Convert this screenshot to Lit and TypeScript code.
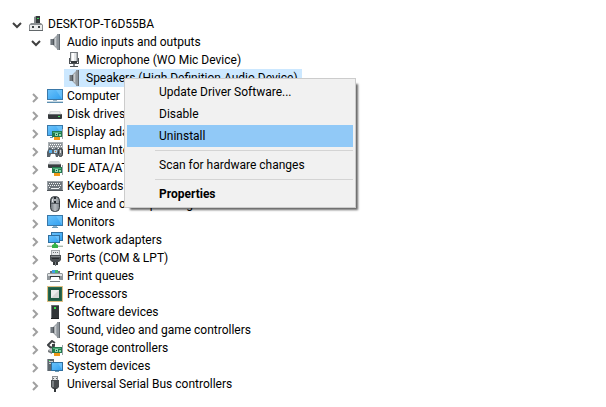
import { LitElement, html, css, svg, nothing, type SVGTemplateResult } from "lit";
import { customElement, state } from "lit/decorators.js";

interface DeviceNode {
  label: string;
  icon: string;
  open?: boolean;
  selected?: boolean;
  leaf?: boolean;
  children?: DeviceNode[];
}

const monitor = svg`
  <rect x="0.5" y="1.5" width="15" height="10" fill="url(#screen)" stroke="#3a78a8"/>
  <path d="M9 2h6v9z" fill="#8ad2ff" opacity=".45"/>`;

const card = svg`
  <path d="M7 13h6v3H7z" fill="#f09a1a"/>
  <path d="M5 7h10v6H5z" fill="#237a4e"/>
  <path d="M15 5h1v10h-1z" fill="#9aa3a8"/>
  <path d="M6 8h8v1H6z" fill="#4faf7c"/>
  <path d="M8 9h3v3H8zM12 10h2v2h-2z" fill="#8fd8ae"/>
  <path d="M9 10h1v1H9z" fill="#17492f"/>`;

const speaker = svg`
  <path d="M3 5h3v6H3z" fill="#70777d"/>
  <path d="M3 5h1v6H3z" fill="#a9afb4"/>
  <path d="M6 5l4-4h1v14h-1l-4-4z" fill="#a3a9ae"/>
  <path d="M6 5h1v6H6z" fill="#50565b"/>
  <path d="M8 4h1v8H8z" fill="#c9cdd0"/>
  <path d="M10 0h3v16h-3z" fill="#8f969c"/>
  <path d="M12 0h1v16h-1z" fill="#636a70"/>`;

const keyboard = svg`
  <rect x="0.5" y="3.5" width="15" height="9" fill="#6f767c" stroke="#9ba1a6"/>
  <path d="M2 5.500h12M1 7.500h13M2 9.500h2M12 9.500h2" stroke="#f2f4f5" stroke-dasharray="1 1"/>
  <path d="M4 10.500h8" stroke="#f2f4f5"/>
  <path d="M0 12h16v1H0z" fill="#4f555a"/>`;

const icons: Record<string, SVGTemplateResult> = {
  host: svg`
    <path d="M8 0h4v8H8z" fill="#35393c"/><path d="M6 1l2-1v8H6z" fill="#85898c"/>
    <path d="M9 2h2v1H9z" fill="#3fd65a"/>
    <path d="M3 7h10l2 2v6H1V9z" fill="#8a8e91"/>
    <path d="M2 9h12v5H2z" fill="#eceded"/>
    <path d="M4 10h2v2H4zM10 10h2v2h-2z" fill="#3c4043"/>
    <path d="M1 14h14v1H1z" fill="#62676a"/>`,
  speaker,
  mic: svg`
    <path d="M4 0h8v10H4z" fill="#777c80"/>
    <path d="M5 1h6v9H5z" fill="#e4e6e7"/>
    <path d="M6 1h2v8H6z" fill="#fff"/><path d="M10 1h1v9h-1z" fill="#b5b9bc"/>
    <path d="M3 6h1v5h8V6h1v6H3z" fill="#4d5154"/>
    <path d="M5 9h6v2H5z" fill="#35393b"/>
    <path d="M7 12h2v2H7z" fill="#85898c"/><path d="M4 14h8v1H4z" fill="#4d5154"/>`,
  computer: svg`${monitor}
    <path d="M6 12h4v1H6z" fill="#9db8c9"/><path d="M0 14h16v1H0z" fill="#5b8eb0"/><path d="M0 13h16v1H0z" fill="#c5d7e2"/>`,
  monitor: svg`${monitor}
    <path d="M6 12h4v1H6z" fill="#8ab0c7"/><path d="M5 13h6v1H5z" fill="#6e9ab5"/>`,
  disk: svg`
    <path d="M3 5h10l2 4H1z" fill="#d7dadb"/>
    <path d="M4 6h8l1 2H3z" fill="#eceeee"/>
    <rect x="1" y="8" width="14" height="5" rx="1" fill="#34383b"/>
    <path d="M2 8h12v1H2z" fill="#676d70"/><path d="M11 10h2v1h-2z" fill="#45de60"/>`,
  display: svg`${monitor}
    <path d="M3 13h3v1H3z" fill="#6e9ab5"/>${card}`,
  hid: svg`
    <rect x="1.500" y="0.500" width="14" height="8" fill="#8f959a" stroke="#aab0b4"/>
    <path d="M3 2.500h12M2 4.500h13M3 6.500h12" stroke="#fff" stroke-dasharray="1 1"/>
    <path d="M2 6h2l1 1h2l1-1h2l1 4v5H9l-1-3H4l-1 3H0v-5z" fill="#59636b"/>
    <path d="M2 8h3v3H2z" fill="#56aeea"/><path d="M7 8h3v3H7z" fill="#a9cfe8"/>
    <path d="M8 9h1v1H8z" fill="#e0792f"/>
    <rect x="11.500" y="6.500" width="4" height="8" rx="2" fill="#72797f" stroke="#363b3f"/>
    <path d="M13 8h1v3h-1z" fill="#dadddf"/>`,
  ide: svg`
    <path d="M3 1h9l2 3H1z" fill="#d3d6d8"/>
    <rect x="1" y="4" width="13" height="4" rx="1" fill="#3a3e41"/>
    <path d="M2 4h11v1H2z" fill="#70767a"/>${card}`,
  keyboard,
  mouse: svg`
    <rect x="3.500" y="0.500" width="9" height="15" rx="4" fill="url(#metal)" stroke="#33383c"/>
    <path d="M4 7h8v1H4z" fill="#565c62"/><path d="M5 3h1v3H5z" fill="#e1e4e6"/>
    <path d="M7 1h2v6H7z" fill="#252a2e"/><path d="M7 3h2v2H7z" fill="#aeb3b7"/>`,
  network: svg`
    <rect x="4.500" y="0.500" width="11" height="8" fill="url(#screen)" stroke="#2f6f9f"/>
    <rect x="1.500" y="3.500" width="11" height="7" fill="url(#screen)" stroke="#2f6f9f"/>
    <path d="M8 4h4v6z" fill="#8ad2ff" opacity=".5"/>
    <path d="M0 13h16v2H0z" fill="#a9b8ae"/><path d="M0 13h16v1H0z" fill="#dce4de"/>
    <path d="M7 11h2v1l2 1v3H5v-3l2-1z" fill="#36b24a"/>`,
  port: svg`
    <path d="M4 0h9v5H4z" fill="#a4a8ab"/><path d="M5 1h7v4H5z" fill="#e6e8e9"/>
    <path d="M6 2h1v1H6zM8 2h1v1H8zM10 2h1v1h-1z" fill="#6c7174"/>
    <path d="M3 5h11v5l-2 2H5l-2-2z" fill="#4b4f52"/><path d="M4 6h9v1H4z" fill="#85898c"/>
    <path d="M5 8h7v1H5z" fill="#282b2d"/>
    <path d="M6 12h5v3H6z" fill="#35393b"/><path d="M8 12h1v4H8z" fill="#777c80"/>`,
  printer: svg`
    <path d="M3 3h10v3H3z" fill="#6b7379"/><path d="M5 2h3v3H5z" fill="#3f9fe8"/><path d="M8 2h3v3H8z" fill="#43b86a"/>
    <path d="M1 5h14l1 1v6H0V6z" fill="#90969a"/>
    <path d="M1 6h14v2H1z" fill="#dfe2e4"/>
    <path d="M3 8h10v4H3z" fill="#2e3235"/><path d="M4 9h8l1 4H3z" fill="#fff"/>
    <path d="M3 13h10v1H3z" fill="#7b8185"/>`,
  cpu: svg`
    <rect x="0.500" y="0.500" width="15" height="15" fill="#f6e9c6" stroke="#c58a22" stroke-dasharray="1 1"/>
    <path d="M1 1h14v14H1z" fill="#286a50"/>
    <path d="M2 2h12v12H2z" fill="#1f5a43"/>
    <path d="M4 4h8v8H4z" fill="#d5d8d6"/><path d="M4 4h8L4 12z" fill="#eceeed"/>`,
  software: svg`
    <path d="M5 1h7v14H5z" fill="#323639"/><path d="M4 1h1v14H4z" fill="#777c80"/>
    <path d="M5 1h7v1H5z" fill="#63686b"/><path d="M7 3h2v2H7z" fill="#39e04d"/>
    <path d="M4 14h8v1H4z" fill="#1d2022"/>`,
  storage: svg`
    <path d="M8 3L5 1 1 5l3 3 3-2V5H5" fill="none" stroke="#3e4245" stroke-width="2"/>
    <path d="M1 10l3-2 3 2v3H4z" fill="#b8bcbf"/><path d="M1 10l4 2v2l-4-2z" fill="#75797c"/>
    ${card}`,
  system: svg`
    <path d="M1 1h6v12H1z" fill="#5d666d"/><path d="M0 1h1v12H0z" fill="#929ba1"/>
    <path d="M2 3h4v1H2zM2 5h4v1H2z" fill="#c6ccd0"/><path d="M2 2h1v1H2z" fill="#3fd65a"/>
    <rect x="4.500" y="4.500" width="11" height="8" fill="url(#screen)" stroke="#2f6f9f"/>
    <path d="M11 5h4v7z" fill="#8ad2ff" opacity=".5"/>
    <path d="M8 13h4v1H8z" fill="#6e9ab5"/>`,
  usb: svg`
    <path d="M5 0h6v4H5z" fill="#8d9194"/><path d="M6 1h4v3H6z" fill="#e3e5e6"/>
    <path d="M6 2h1v1H6zM9 2h1v1H9z" fill="#5b6064"/>
    <path d="M4 4h8v7l-2 2H6l-2-2z" fill="#484c4f"/><path d="M5 5h2v6H5z" fill="#7b8083"/>
    <path d="M7 12h2v4H7z" fill="#33373a"/>`,
};

const devices: DeviceNode = {
  label: "DESKTOP-T6D55BA",
  icon: "host",
  open: true,
  children: [
    {
      label: "Audio inputs and outputs",
      icon: "speaker",
      open: true,
      children: [
        { label: "Microphone (WO Mic Device)", icon: "mic", leaf: true },
        { label: "Speakers (High Definition Audio Device)", icon: "speaker", leaf: true, selected: true },
      ],
    },
    { label: "Computer", icon: "computer" },
    { label: "Disk drives", icon: "disk" },
    { label: "Display adapters", icon: "display" },
    { label: "Human Interface Devices", icon: "hid" },
    { label: "IDE ATA/ATAPI controllers", icon: "ide" },
    { label: "Keyboards", icon: "keyboard" },
    { label: "Mice and other pointing devices", icon: "mouse" },
    { label: "Monitors", icon: "monitor" },
    { label: "Network adapters", icon: "network" },
    { label: "Ports (COM & LPT)", icon: "port" },
    { label: "Print queues", icon: "printer" },
    { label: "Processors", icon: "cpu" },
    { label: "Software devices", icon: "software" },
    { label: "Sound, video and game controllers", icon: "speaker" },
    { label: "Storage controllers", icon: "storage" },
    { label: "System devices", icon: "system" },
    { label: "Universal Serial Bus controllers", icon: "usb" },
  ],
};

const menuGroups = [
  ["Update Driver Software...", "Disable", "Uninstall"],
  ["Scan for hardware changes"],
  ["Properties"],
];

@customElement("device-menu")
export class DeviceMenu extends LitElement {
  @state() private active = "Uninstall";

  static styles = css`
    :host {
      display: block;
      box-sizing: border-box;
      padding: 2px;
      border: 1px solid #ccc;
      background: #f1f1f1;
      box-shadow: 4px 4px 2px -2px rgba(0, 0, 0, 0.6);
    }
    .item {
      display: block;
      width: 100%;
      height: 22px;
      padding: 0 0 0 32px;
      border: 0;
      background: none;
      color: #000;
      font: inherit;
      text-align: left;
      white-space: nowrap;
    }
    .active {
      background: #91c9f7;
    }
    .default {
      font-weight: 700;
    }
    .separator {
      height: 1px;
      margin: 3px 0 3px 28px;
      border: 0;
      background: #d4d4d4;
    }
  `;

  render() {
    return html`<div role="menu">
      ${menuGroups.map(
        (group, i) => html`
          ${i > 0 ? html`<hr class="separator" />` : nothing}
          ${group.map(
            (name) => html`<button
              role="menuitem"
              class="item ${name === this.active ? "active" : ""} ${name === "Properties" ? "default" : ""}"
              @mouseenter=${() => (this.active = name)}
            >${name}</button>`
          )}
        `
      )}
    </div>`;
  }
}

@customElement("app-root")
export class AppRoot extends LitElement {
  static styles = css`
    :host {
      display: block;
      position: relative;
      box-sizing: border-box;
      min-height: 100vh;
      padding: 15px 9px;
      overflow: hidden;
      background: #fff;
      color: #000;
      font: 12px/18px "Segoe UI", Roboto, "Open Sans", sans-serif;
    }
    .defs {
      position: absolute;
      width: 0;
      height: 0;
    }
    ul {
      margin: 0;
      padding: 0;
      list-style: none;
    }
    ul ul {
      padding-left: 19px;
    }
    .row {
      display: flex;
      height: 18px;
    }
    .toggle {
      width: 17px;
      height: 18px;
      padding: 0;
      border: 0;
      background: none;
      color: #a0a0a0;
    }
    .toggle.open {
      color: #404040;
    }
    .arrow {
      display: block;
      width: 16px;
      height: 18px;
      fill: none;
      stroke: currentColor;
      stroke-width: 2;
    }
    .node {
      display: flex;
      align-items: center;
      gap: 4px;
      padding: 0 4px 0 2px;
      white-space: nowrap;
    }
    .selected {
      background: #cce8ff;
    }
    .icon {
      flex: none;
      width: 16px;
      height: 16px;
    }
    .menu {
      position: absolute;
      left: 124px;
      top: 78px;
      width: 232px;
    }
  `;

  private toggle(node: DeviceNode) {
    if (node.children) {
      node.open = !node.open;
      this.requestUpdate();
    }
  }

  private renderNode(node: DeviceNode): unknown {
    return html`<li role="treeitem" aria-selected=${node.selected ? "true" : "false"}>
      <div class="row">
        ${node.leaf
          ? html`<span class="toggle"></span>`
          : html`<button
              class="toggle ${node.open ? "open" : ""}"
              aria-label=${(node.open ? "Collapse " : "Expand ") + node.label}
              @click=${() => this.toggle(node)}
            >
              <svg class="arrow" viewBox="0 0 16 18" aria-hidden="true">
                ${node.open ? svg`<path d="M4 8l4 4 4-4"/>` : svg`<path d="M5 7l4 4-4 4"/>`}
              </svg>
            </button>`}
        <span class="node ${node.selected ? "selected" : ""}">
          <svg class="icon" viewBox="0 0 16 16" aria-hidden="true">${icons[node.icon]}</svg>
          <span>${node.label}</span>
        </span>
      </div>
      ${node.open && node.children
        ? html`<ul role="group">${node.children.map((child) => this.renderNode(child))}</ul>`
        : nothing}
    </li>`;
  }

  render() {
    return html`
      <svg class="defs" aria-hidden="true">
        <defs>
          <linearGradient id="screen" x1="0" y1="0" x2="1" y2="1">
            <stop offset="0" stop-color="#6cc3fb" />
            <stop offset="1" stop-color="#2f9ff0" />
          </linearGradient>
          <linearGradient id="metal" x1="0" y1="0" x2="1" y2="0">
            <stop offset="0" stop-color="#6b7278" />
            <stop offset=".5" stop-color="#b9bec2" />
            <stop offset="1" stop-color="#7a8187" />
          </linearGradient>
        </defs>
      </svg>
      <ul role="tree" aria-label="Devices">${this.renderNode(devices)}</ul>
      <device-menu class="menu"></device-menu>
    `;
  }
}
